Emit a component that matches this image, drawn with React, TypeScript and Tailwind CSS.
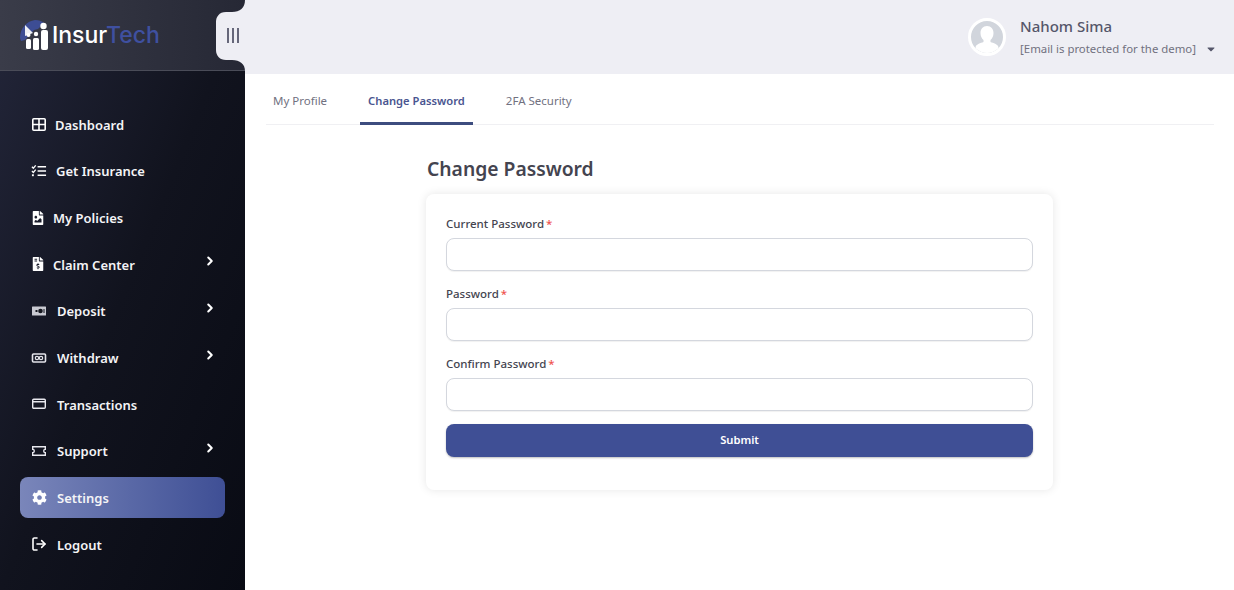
import React from 'react';
import { ChevronRight, LogOut } from 'lucide-react';
import { FaCog, FaFileImage, FaFileInvoiceDollar, FaCaretDown } from 'react-icons/fa';

const iconClass = 'text-white';

const GridIcon = () => (
  <svg width="16" height="16" viewBox="0 0 16 16" className="text-white">
    <rect x="1.800" y="1.800" width="12.400" height="11.400" fill="none" stroke="currentColor" strokeWidth="1.600" rx="1" />
    <path d="M8 2v11M2 7.500h12" stroke="currentColor" strokeWidth="1.600" />
  </svg>
);

const ChecklistIcon = () => (
  <svg width="17" height="16" viewBox="0 0 17 16" className="text-white">
    <path d="M7 3.500h9M7 8h9M7 12.500h9" stroke="currentColor" strokeWidth="1.500" />
    <path d="M1 3.500l1.500 1.500L5 2M1 8l1.500 1.500L5 6.500" fill="none" stroke="currentColor" strokeWidth="1.400" />
    <rect x="1" y="11.500" width="2" height="2" fill="currentColor" />
  </svg>
);

const MoneyIcon = () => (
  <svg width="16" height="16" viewBox="0 0 16 16" className="text-[#c9cad2]">
    <rect x="1" y="3.500" width="14" height="9" fill="currentColor" rx="0.500" />
    <circle cx="9.500" cy="8" r="2.300" fill="#15171f" />
    <rect x="4.500" y="7" width="2" height="2" fill="#15171f" />
    <rect x="12.500" y="6" width="1" height="4" fill="#15171f" />
  </svg>
);

const CashIcon = () => (
  <svg width="16" height="16" viewBox="0 0 16 16" className="text-[#e4e4ea]">
    <rect x="1.500" y="4" width="13" height="8" fill="none" stroke="currentColor" strokeWidth="1.600" rx="1" />
    <circle cx="6" cy="8" r="1.700" fill="none" stroke="currentColor" strokeWidth="1.200" />
    <circle cx="10" cy="8" r="1.700" fill="none" stroke="currentColor" strokeWidth="1.200" />
  </svg>
);

const CardIcon = () => (
  <svg width="16" height="16" viewBox="0 0 16 16" className="text-[#e8e8ee]">
    <rect x="1.700" y="3.200" width="12.600" height="9" fill="none" stroke="currentColor" strokeWidth="1.400" rx="1" />
    <rect x="2" y="5" width="12" height="1.500" fill="currentColor" />
  </svg>
);

const TicketIcon = () => (
  <svg width="16" height="16" viewBox="0 0 16 16" className="text-[#e8e8ee]">
    <path
      d="M1.700 3.800h12.600v2.600a1.600 1.600 0 0 0 0 3.200v2.600H1.700V9.600a1.600 1.600 0 0 0 0-3.200z"
      fill="none"
      stroke="currentColor"
      strokeWidth="1.400"
    />
  </svg>
);

const menu = [
  { label: 'Dashboard', icon: <GridIcon />, gap: 'gap-[8px]' },
  { label: 'Get Insurance', icon: <ChecklistIcon />, gap: 'gap-[9px]' },
  { label: 'My Policies', icon: <FaFileImage size={14} className={iconClass} />, gap: 'gap-[8px]', narrow: true },
  { label: 'Claim Center', icon: <FaFileInvoiceDollar size={14} className={iconClass} />, gap: 'gap-[8px]', arrow: true, narrow: true },
  { label: 'Deposit', icon: <MoneyIcon />, gap: 'gap-[10px]', arrow: true },
  { label: 'Withdraw', icon: <CashIcon />, gap: 'gap-[10px]', arrow: true },
  { label: 'Transactions', icon: <CardIcon />, gap: 'gap-[10px]' },
  { label: 'Support', icon: <TicketIcon />, gap: 'gap-[10px]', arrow: true },
  { label: 'Settings', icon: <FaCog size={15} className={iconClass} />, gap: 'gap-[10px]', active: true },
  { label: 'Logout', icon: <LogOut size={16} strokeWidth={2.400} className={iconClass} />, gap: 'gap-[10px]' },
];

const Logo = () => (
  <div className="flex items-center gap-[4px]">
    <svg width="28" height="32" viewBox="0 0 28 32">
      <path d="M0 19C0 9 7 2 15 1c4 0 7 1 9 3l-6 6-4 1-9 10-4 1z" fill="#3d4d94" />
      <path d="M5 6L13 14 5 17z" fill="#eef0f6" />
      <circle cx="8.500" cy="16" r="2" fill="#fff" />
      <circle cx="16" cy="15" r="2.200" fill="#fff" />
      <circle cx="23.500" cy="7" r="3.200" fill="#fff" />
      <rect x="6" y="20" width="5" height="10" rx="1.500" fill="#fff" />
      <rect x="13" y="19" width="6" height="12" rx="1.500" fill="#fff" />
      <rect x="21" y="11" width="7" height="20" rx="2" fill="#fff" />
    </svg>
    <span className="text-[23px] font-medium leading-none font-['Inter',sans-serif]">
      <span className="text-white">Insur</span>
      <span className="text-[#3f50a0]">Tech</span>
    </span>
  </div>
);

const Field = ({ label }: { label: string }) => (
  <div className="mb-[13px]">
    <label className="block h-5 mb-1 text-[11.500px] leading-[20px] font-medium text-[#44444f]">
      {label}
      <span className="ml-[2px] text-[#ef5350]">*</span>
    </label>
    <input
      type="password"
      className="block w-full h-[33px] rounded-lg border border-[#d4d7de] bg-white shadow-[0_1px_1px_rgba(0,0,0,0.06)]"
    />
  </div>
);

export default function App() {
  return (
    <div className="flex h-screen w-full overflow-hidden bg-white font-['Noto_Sans',sans-serif]">
      {/* Sidebar */}
      <aside className="relative w-[245px] shrink-0 bg-gradient-to-br from-[#23263a] via-[#11131e] to-[#090b14]">
        <div className="flex h-[71px] items-center pl-[20px] border-b border-[#4a4c58] bg-gradient-to-r from-[#3a3c49] to-[#262835]">
          <Logo />
        </div>

        {/* Toggle tab cut into the sidebar */}
        <svg width="29" height="71" viewBox="0 0 29 71" className="absolute top-0 right-0 text-[#eeeef4]">
          <path
            d="M29 0C29 8 24 12 16 12H10C3 12 0 17 0 22V50C0 56 4 60 10 60H16C24 60 29 64 29 71Z"
            fill="currentColor"
          />
        </svg>
        <div className="absolute left-[227px] top-[28px] flex gap-[3px]">
          <div className="h-[15px] w-[2px] bg-[#66677a]" />
          <div className="h-[15px] w-[2px] bg-[#66677a]" />
          <div className="h-[15px] w-[2px] bg-[#66677a]" />
        </div>

        <nav className="flex flex-col gap-[5.650px] px-5 pt-[33px]">
          {menu.map((item) => (
            <div
              key={item.label}
              className={`flex h-[41px] items-center rounded-lg pl-[11px] pr-[8px] ${item.gap} ${
                item.active ? 'bg-gradient-to-r from-[#7a86ba] to-[#3f4f95]' : ''
              }`}
            >
              <span className={`flex items-center justify-center ${item.narrow ? 'w-[14px]' : 'w-[16px]'}`}>
                {item.icon}
              </span>
              <span className="flex-1 pt-[2px] text-[13px] font-semibold text-[#f4f4f6]">{item.label}</span>
              {item.arrow && <ChevronRight size={14} strokeWidth={3.500} className="mb-[6px] text-white" />}
            </div>
          ))}
        </nav>
      </aside>

      {/* Main */}
      <main className="flex-1 min-w-0">
        <header className="flex h-[74px] items-center justify-end bg-[#eeeef4] pr-[17px]">
          <div className="flex items-center gap-[14px]">
            <div className="h-[38px] w-[38px] overflow-hidden rounded-full border-[3px] border-white bg-[#d1d5dc]">
              <svg viewBox="0 0 32 32" className="h-full w-full">
                <path
                  d="M16 5c4 0 6.500 3 6.500 7 0 3-1.200 5.500-3 7v2c3 1.200 7 2 8 5 0 2-1 6-1 6H5.500s-1-4-1-6c1-3 5-3.800 8-5v-2c-1.800-1.500-3-4-3-7 0-4 2.500-7 6.500-7z"
                  fill="#fff"
                />
              </svg>
            </div>
            <div className="flex flex-col">
              <span className="text-[15px] leading-[22px] font-medium text-[#55566a]">Nahom Sima</span>
              <div className="mt-[2px] flex items-center gap-[9px]">
                <span className="text-[11.400px] leading-[20px] text-[#71717f]">[Email is protected for the demo]</span>
                <FaCaretDown size={12} className="text-[#55566a]" />
              </div>
            </div>
          </div>
        </header>

        <div className="pl-[21px] pr-[20px]">
          <div className="flex h-[51px] items-stretch border-b border-[#f0f0f3]">
            <div className="flex items-center px-[7px] mr-[26px] pt-[4px] text-[11.500px] text-[#71717f]">My Profile</div>
            <div className="flex items-center px-[8px] mr-[25px] -mb-px border-b-[3px] border-[#3d4d7f] pt-[6px] text-[11.200px] font-semibold text-[#4a5590]">
              Change Password
            </div>
            <div className="flex items-center px-[8px] pt-[4px] text-[11.500px] text-[#71717f]">2FA Security</div>
          </div>

          <div className="ml-[160px] mt-[29px] w-[627px]">
            <h2 className="mb-[10px] pl-px text-[19.300px] leading-[30px] font-semibold text-[#44444f]">Change Password</h2>
            <div className="rounded-lg bg-white px-5 pt-5 pb-[33px] shadow-[0_0_10px_rgba(0,0,0,0.1)]">
              <Field label="Current Password" />
              <Field label="Password" />
              <Field label="Confirm Password" />
              <button className="block h-[33px] w-full rounded-lg bg-[#3f4f95] text-[11.200px] font-semibold text-white shadow-[0_1px_2px_rgba(0,0,0,0.25)]">
                Submit
              </button>
            </div>
          </div>
        </div>
      </main>
    </div>
  );
}
